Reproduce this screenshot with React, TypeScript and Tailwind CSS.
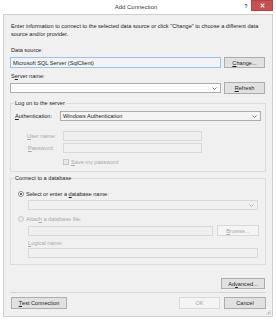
import React from "react";

const Chevron = ({ color = "#606060" }: { color?: string }) => (
  <svg width="5" height="3" viewBox="0 0 5 3" className="shrink-0">
    <path d="M0.5 0.5 L2.5 2.5 L4.5 0.5" fill="none" stroke={color} strokeWidth="0.8" />
  </svg>
);

const Btn = ({
  children,
  w,
  h = "h-[11px]",
  disabled = false,
}: {
  children: React.ReactNode;
  w: string;
  h?: string;
  disabled?: boolean;
}) => (
  <div
    className={`${w} ${h} shrink-0 flex items-center justify-center border ${
      disabled
        ? "border-[#d9d9d9] bg-[#f4f4f4] text-[#a8a8a8]"
        : "border-[#adadad] bg-[#e1e1e1] text-[#1e1e1e]"
    }`}
  >
    {children}
  </div>
);

const U = ({ children }: { children: React.ReactNode }) => (
  <span className="underline underline-offset-[1px] decoration-[0.5px]">{children}</span>
);

export default function App() {
  return (
    <div
      className="w-[276px] h-[320px] bg-white text-[5.6px] leading-[8px] text-[#1e1e1e] overflow-hidden"
      style={{ fontFamily: '"Liberation Sans", Arial, sans-serif' }}
    >
      {/* title bar */}
      <div className="h-[14px] flex items-start">
        <div className="flex-1 h-[14px] flex items-center justify-center pl-[30px] text-[6px] text-[#3c3c3c]">
          Add Connection
        </div>
        <div className="w-[8px] h-[12px] flex items-center justify-center text-[5.5px] text-[#555] font-bold">
          ?
        </div>
        <div className="ml-[1px] mr-[3px] w-[22px] h-[11px] bg-[#c75050] border border-[#b24444] flex items-center justify-center">
          <svg width="5" height="5" viewBox="0 0 5 5">
            <path d="M0.7 0.7 L4.3 4.3 M4.3 0.7 L0.7 4.3" stroke="white" strokeWidth="1.1" />
          </svg>
        </div>
      </div>

      {/* client area */}
      <div className="relative ml-[3px] w-[270px] h-[303px] border border-[#cfcfcf] bg-[#f0f0f0]">
        <p className="mt-[7px] pl-[7px] pr-[6px]">
          Enter information to connect to the selected data source or click "Change" to choose a different
          data source and/or provider.
        </p>

        <div className="mt-[8px] pl-[7px] h-[8px]">Data source:</div>
        <div className="mt-[3px] ml-[6px] h-[11px] flex gap-[3px]">
          <div className="w-[211px] h-[11px] border border-[#99c3ec] bg-[#f3f3f3] pl-[2px] flex items-center">
            Microsoft SQL Server (SqlClient)
          </div>
          <Btn w="w-[41px]">
            <U>C</U>hange...
          </Btn>
        </div>

        <div className="mt-[4px] pl-[7px] h-[8px]">
          S<U>e</U>rver name:
        </div>
        <div className="mt-[2px] ml-[6px] h-[12px] flex items-center gap-[3px]">
          <div className="w-[211px] h-[10px] border border-[#abadb3] bg-white flex items-center justify-end pr-[3px]">
            <Chevron />
          </div>
          <Btn w="w-[41px]" h="h-[12px]">
            <U>R</U>efresh
          </Btn>
        </div>

        {/* log on group */}
        <div className="relative mt-[9px] ml-[6px] w-[256px] border border-[#dcdcdc] pb-[6px]">
          <span className="absolute -top-[5px] left-[3px] px-[1px] bg-[#f0f0f0]">Log on to the server</span>
          <div className="mt-[7px] h-[10px] flex items-center">
            <div className="w-[49px] pl-[4px]">
              <U>A</U>uthentication:
            </div>
            <div className="w-[201px] h-[10px] border border-[#acacac] bg-[#f4f4f4] flex items-center justify-between pl-[2px] pr-[3px]">
              <span>Windows Authentication</span>
              <Chevron />
            </div>
          </div>
          <div className="mt-[10px] h-[10px] flex items-center text-[#a8a8a8]">
            <div className="w-[52px] pl-[16px]">
              <U>U</U>ser name:
            </div>
            <div className="w-[139px] h-[10px] border border-[#d9d9d9] bg-[#f0f0f0]" />
          </div>
          <div className="mt-[2px] h-[10px] flex items-center text-[#a8a8a8]">
            <div className="w-[52px] pl-[17px]">
              <U>P</U>assword:
            </div>
            <div className="w-[139px] h-[10px] border border-[#d9d9d9] bg-[#f0f0f0]" />
          </div>
          <div className="mt-[6px] h-[6px] flex items-center text-[#a8a8a8]">
            <div className="ml-[52px] w-[6px] h-[6px] border border-[#c8c8c8] bg-[#e8e8e8]" />
            <span className="ml-[2px]">
              <U>S</U>ave my password
            </span>
          </div>
        </div>

        {/* database group */}
        <div className="relative mt-[6px] ml-[6px] w-[256px] border border-[#dcdcdc] pb-[6px]">
          <span className="absolute -top-[5px] left-[3px] px-[1px] bg-[#f0f0f0]">Connect to a database</span>
          <div className="mt-[11px] h-[8px] flex items-center pl-[7px]">
            <div className="w-[6px] h-[6px] rounded-full border border-[#8a8a8a] bg-white flex items-center justify-center">
              <div className="w-[2px] h-[2px] rounded-full bg-[#333]" />
            </div>
            <span className="ml-[2px]">
              Select or enter a <U>d</U>atabase name:
            </span>
          </div>
          <div className="mt-[2px] ml-[17px] w-[230px] h-[10px] border border-[#d9d9d9] bg-[#f0f0f0] flex items-center justify-end pr-[3px]">
            <Chevron color="#a0a0a0" />
          </div>
          <div className="mt-[5px] h-[8px] flex items-center pl-[7px] text-[#a8a8a8]">
            <div className="w-[6px] h-[6px] rounded-full border border-[#c8c8c8] bg-[#ececec]" />
            <span className="ml-[2px]">
              Attac<U>h</U> a database file:
            </span>
          </div>
          <div className="mt-[2px] ml-[17px] h-[11px] flex items-center gap-[4px] text-[#a8a8a8]">
            <div className="w-[185px] h-[10px] border border-[#d9d9d9] bg-[#f0f0f0]" />
            <Btn w="w-[42px]" disabled>
              <U>B</U>rowse...
            </Btn>
          </div>
          <div className="mt-[3px] ml-[17px] h-[8px] text-[#a8a8a8]">
            <U>L</U>ogical name:
          </div>
          <div className="mt-[1px] ml-[17px] w-[230px] h-[10px] border border-[#d9d9d9] bg-[#f0f0f0]" />
        </div>

        <div className="mt-[13px] mr-[7px] flex justify-end">
          <Btn w="w-[44px]">
            Ad<U>v</U>anced...
          </Btn>
        </div>

        <div className="mt-[3px] ml-[6px] w-[256px] h-px bg-[#d5d5d5]" />

        <div className="mt-[4px] h-[12px] flex items-center">
          <div className="ml-[7px]">
            <Btn w="w-[56px]" h="h-[12px]">
              <U>T</U>est Connection
            </Btn>
          </div>
          <div className="ml-auto mr-[6px] flex gap-[4px]">
            <Btn w="w-[41px]" h="h-[12px]" disabled>
              OK
            </Btn>
            <Btn w="w-[42px]" h="h-[12px]">
              Cancel
            </Btn>
          </div>
        </div>

        {/* resize grip */}
        <svg className="absolute right-[1px] bottom-[1px]" width="5" height="5" viewBox="0 0 5 5">
          <rect x="3.5" y="0.5" width="1" height="1" fill="#b0b0b0" />
          <rect x="2" y="2" width="1" height="1" fill="#b0b0b0" />
          <rect x="3.5" y="2" width="1" height="1" fill="#b0b0b0" />
          <rect x="0.5" y="3.5" width="1" height="1" fill="#b0b0b0" />
          <rect x="2" y="3.5" width="1" height="1" fill="#b0b0b0" />
          <rect x="3.5" y="3.5" width="1" height="1" fill="#b0b0b0" />
        </svg>
      </div>
    </div>
  );
}
